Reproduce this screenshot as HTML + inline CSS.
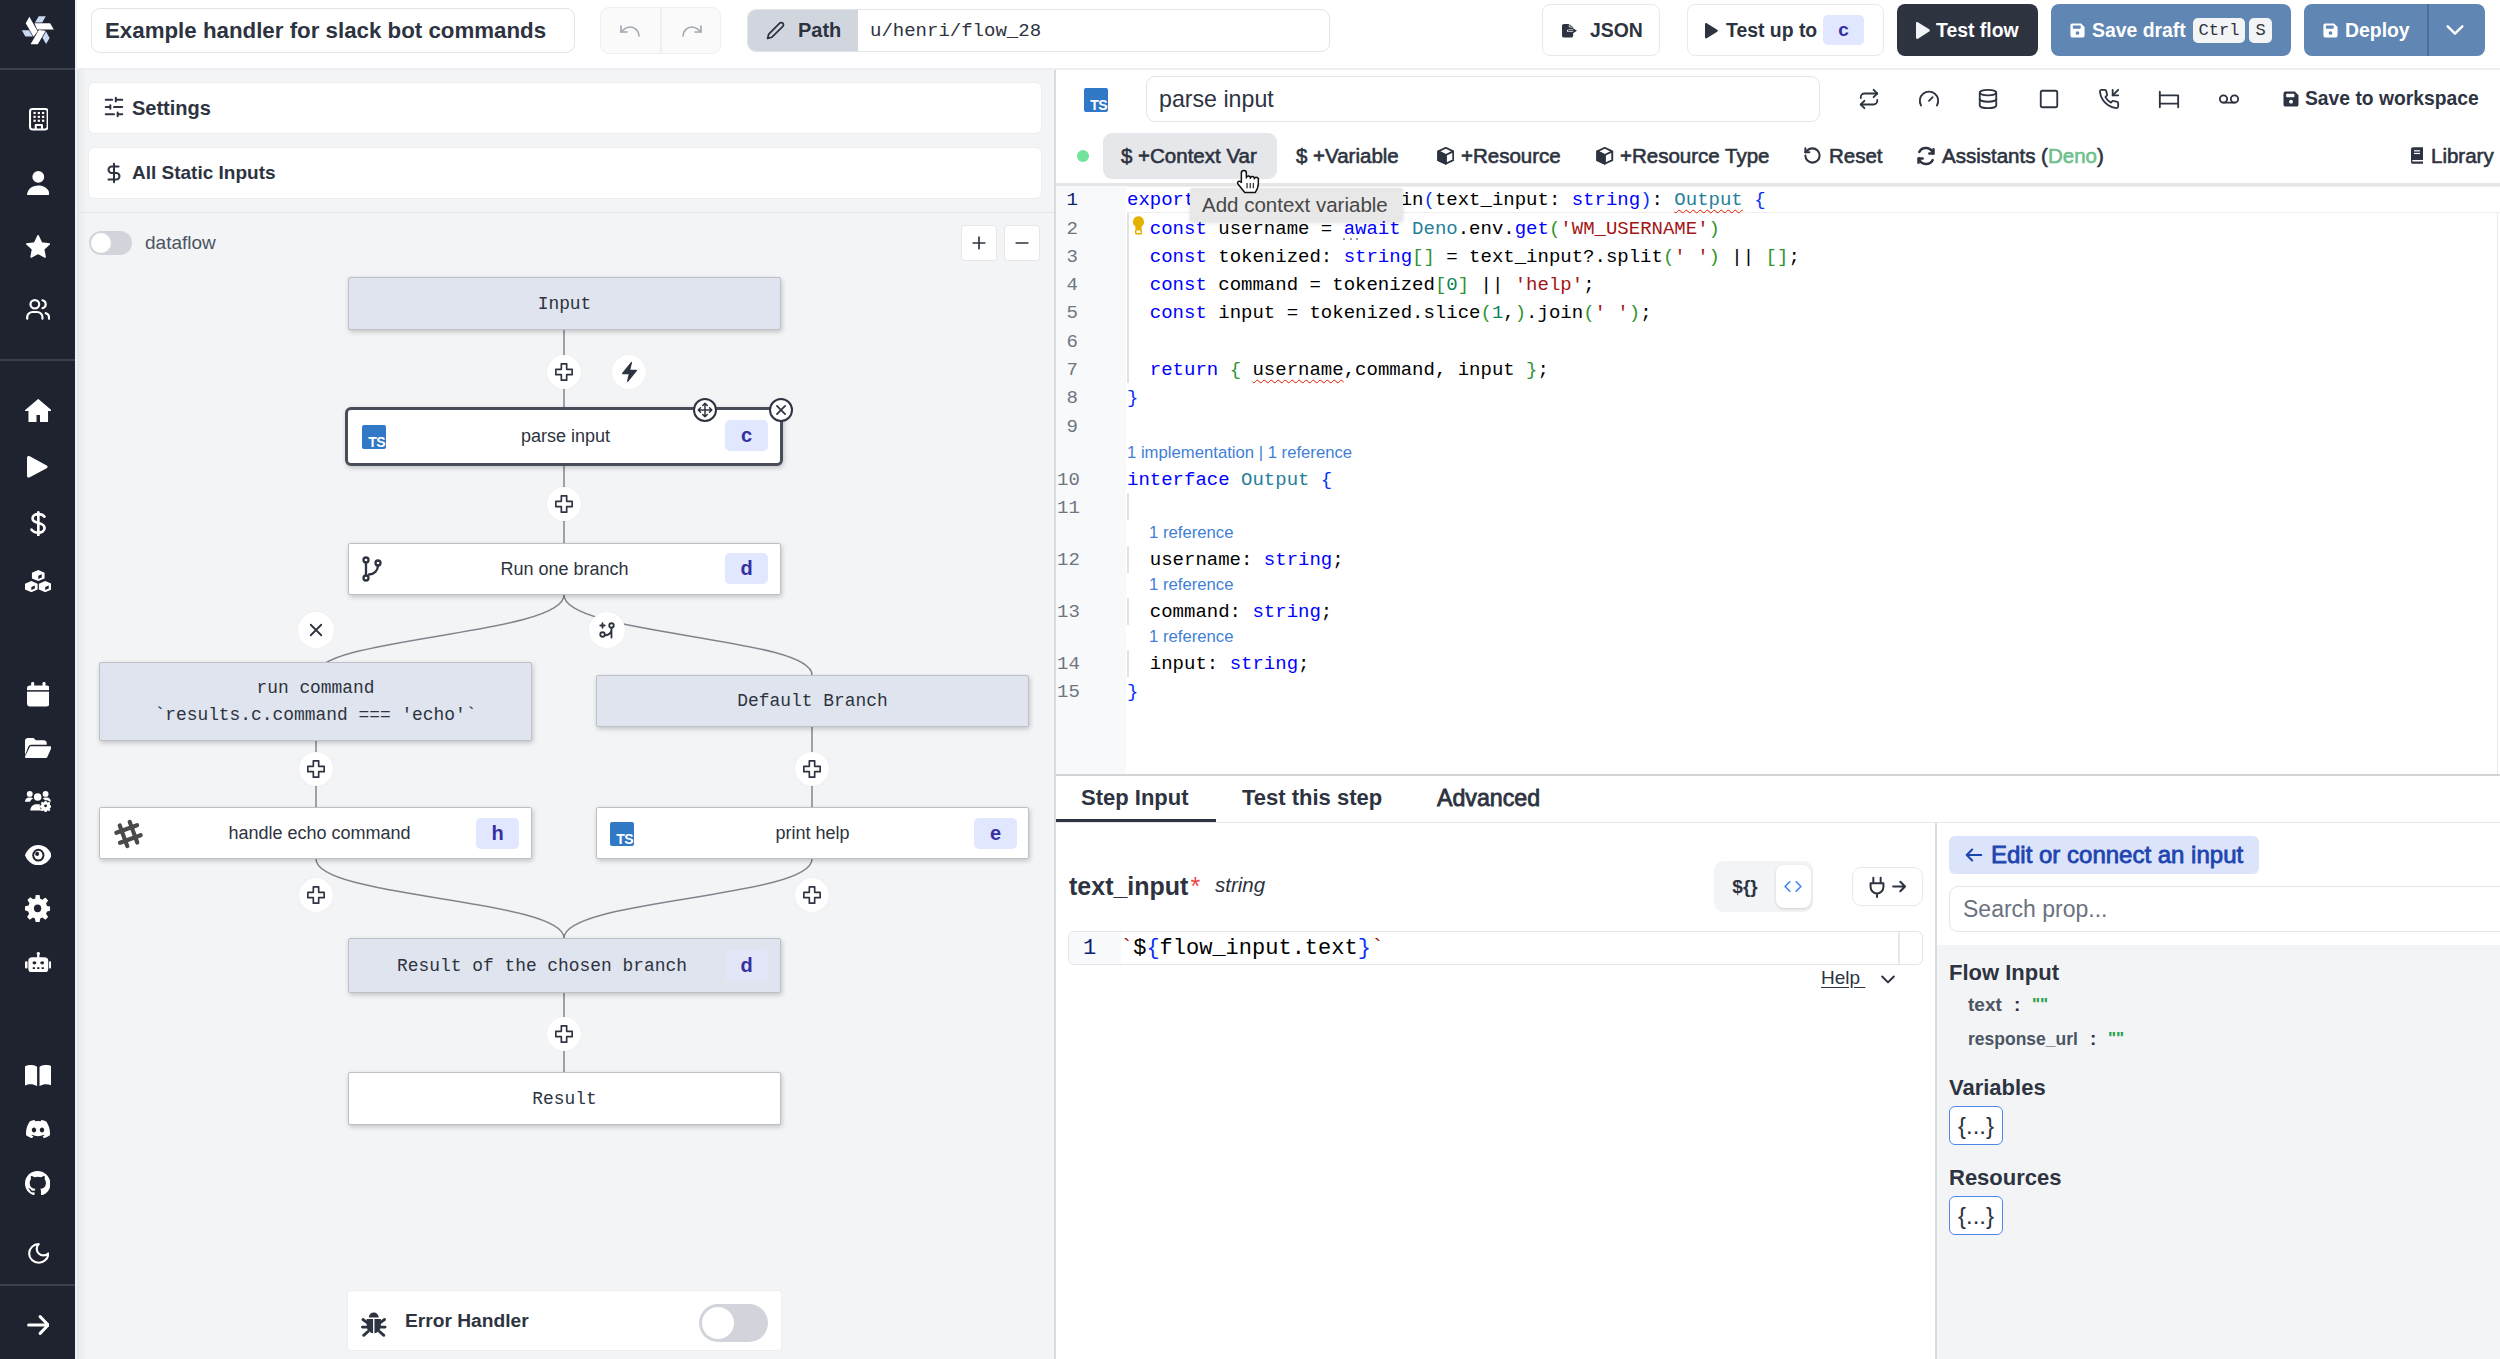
<!DOCTYPE html><html><head><meta charset="utf-8"><style>
*{box-sizing:border-box;margin:0;padding:0}
html,body{width:2500px;height:1359px;overflow:hidden}
body{position:relative;font-family:"Liberation Sans",sans-serif;background:#fff;color:#2d3340}
.a{position:absolute}
.m{font-family:"Liberation Mono",monospace}
.fx{display:flex;align-items:center}
.fc{display:flex;align-items:center;justify-content:center}
svg{display:block}
.btn{position:absolute;display:flex;align-items:center;justify-content:center;border-radius:8px;font-weight:bold;font-size:20px;white-space:nowrap}
.node{position:absolute;border:1.5px solid #bcc1c8;box-shadow:1px 2px 5px rgba(0,0,0,.2);border-radius:2px;display:flex;align-items:center;justify-content:center;color:#2d3340}
.gn{background:#dfe4ee}
.wn{background:#fff}
.nt{font-family:"Liberation Mono",monospace;font-size:17.9px}
.st{font-size:18px}
.badge{position:absolute;background:#e0e7ff;color:#3730a3;font-weight:bold;font-size:20px;border-radius:5px;display:flex;align-items:center;justify-content:center}
.circ{position:absolute;border-radius:50%;background:#fff;display:flex;align-items:center;justify-content:center;box-shadow:0 0 2px rgba(0,0,0,.06)}
.ln{position:absolute;white-space:pre;font-family:"Liberation Mono",monospace;font-size:19px;line-height:28px;color:#000}
.num{position:absolute;font-family:"Liberation Mono",monospace;font-size:19px;line-height:28px;color:#6e7681;text-align:right;width:40px}
.k{color:#0000ff}.t{color:#267f99}.s{color:#a31515}.g{color:#319331}.b{color:#0431fa}.n{color:#098658}
.lens{position:absolute;font-size:16.7px;color:#3f7fd8;white-space:nowrap}
.sq{text-decoration:underline wavy #e51400;text-decoration-thickness:1px;text-underline-offset:4px}
</style></head><body><div class="a" style="left:0;top:0;width:75px;height:1359px;background:#1f2330"></div>
<div class="a" style="left:75px;top:0;width:2px;height:1359px;background:#eef1f6"></div>
<div class="a" style="left:0;top:68px;width:75px;height:2px;background:#3b404c"></div>
<div class="a" style="left:0;top:359px;width:75px;height:2px;background:#3b404c"></div>
<div class="a" style="left:0;top:1284px;width:75px;height:2px;background:#3b404c"></div>
<svg class="a" style="left:0;top:0" width="75" height="68" viewBox="0 0 75 68"><g><polygon points="34.5,23.2 50.1,23.2 53.8,29.5 37.2,29.5" fill="#fff"/><polygon points="38.7,16.2 45.8,16.2 42.2,22.5 35,22.5" fill="#c9d8f3"/></g><g transform="rotate(120 37.9 30.2)"><polygon points="34.5,23.2 50.1,23.2 53.8,29.5 37.2,29.5" fill="#fff"/><polygon points="38.7,16.2 45.8,16.2 42.2,22.5 35,22.5" fill="#c9d8f3"/></g><g transform="rotate(240 37.9 30.2)"><polygon points="34.5,23.2 50.1,23.2 53.8,29.5 37.2,29.5" fill="#fff"/><polygon points="38.7,16.2 45.8,16.2 42.2,22.5 35,22.5" fill="#c9d8f3"/></g></svg>
<svg class="a" style="left:28.5px;top:108.4px;color:#fff" width="19.700000000000003" height="22.400000000000006" viewBox="2.5 0.5 19.0 23.0" preserveAspectRatio="none" fill="none" stroke="currentColor" stroke-width="2" stroke-linecap="round" stroke-linejoin="round"><rect x="3.5" y="1.5" width="17" height="21" rx="2.5"/><g fill="#fff" stroke="none"><rect x="6.8" y="4.5" width="2.2" height="2.2"/><rect x="10.9" y="4.5" width="2.2" height="2.2"/><rect x="15" y="4.5" width="2.2" height="2.2"/><rect x="6.8" y="8.5" width="2.2" height="2.2"/><rect x="10.9" y="8.5" width="2.2" height="2.2"/><rect x="15" y="8.5" width="2.2" height="2.2"/><rect x="6.8" y="12.5" width="2.2" height="2.2"/><rect x="10.9" y="12.5" width="2.2" height="2.2"/><rect x="15" y="12.5" width="2.2" height="2.2"/></g><path d="M9 22v-4h6v4"/></svg>
<svg class="a" style="left:26.7px;top:170.6px;color:#fff" width="22.599999999999998" height="24.599999999999994" viewBox="1.5 1 21.0 23" preserveAspectRatio="none" fill="currentColor"><circle cx="12" cy="6.5" r="5.5"/><path d="M1.5 24c0-6 4.5-9.5 10.5-9.5S22.5 18 22.5 24z"/></svg>
<svg class="a" style="left:25.8px;top:235px;color:#fff" width="24.2" height="22.80000000000001" viewBox="0.55 0.75 22.9 21.85" preserveAspectRatio="none" fill="currentColor"><path d="M12 1.5l3.3 6.9 7.4.9-5.5 5.1 1.4 7.4L12 18.2l-6.6 3.6 1.4-7.4L1.3 9.3l7.4-.9z" stroke="#fff" stroke-width="1.5" stroke-linejoin="round"/></svg>
<svg class="a" style="left:25.8px;top:298.8px;color:#fff" width="24.2" height="20.80000000000001" viewBox="0.9 1.9 22.200000000000003 20.200000000000003" preserveAspectRatio="none" fill="none" stroke="currentColor" stroke-width="2" stroke-linecap="round" stroke-linejoin="round"><circle cx="9" cy="7" r="4"/><path d="M2 21v-1.5a5 5 0 0 1 5-5h4a5 5 0 0 1 5 5V21"/><path d="M16 3.13a4 4 0 0 1 0 7.75"/><path d="M22 21v-1.5a4 4 0 0 0-3-3.87"/></svg>
<svg class="a" style="left:24.7px;top:399.4px;color:#fff" width="26.500000000000004" height="23.0" viewBox="0.5 2 23.0 20" preserveAspectRatio="none" fill="currentColor"><path d="M12 2.5L1 12h3v9.5h6v-6h4v6h6V12h3z" stroke="#fff" stroke-width="1" stroke-linejoin="round"/></svg>
<svg class="a" style="left:27.4px;top:456.3px;color:#fff" width="20.300000000000004" height="21.69999999999999" viewBox="5 1.9 16.8 20.200000000000003" preserveAspectRatio="none" fill="currentColor"><path d="M5 3.5c0-1.2 1.3-1.9 2.3-1.3l14 8.5c1 .6 1 2 0 2.6l-14 8.5C6.3 22.4 5 21.7 5 20.5z"/></svg>
<svg class="a" style="left:30px;top:510.7px;color:#fff" width="15.899999999999999" height="25.599999999999966" viewBox="4.5 0.3 14.3 23.4" preserveAspectRatio="none" fill="none" stroke="currentColor" stroke-width="2.4" stroke-linecap="round" stroke-linejoin="round"><path d="M12 1.5v21"/><path d="M17.5 5.5c-1-1.4-3-2.3-5.5-2.3-3 0-5.2 1.6-5.2 4s2 3.3 5.2 4.1c3.4.8 5.6 1.9 5.6 4.6 0 2.5-2.4 4.2-5.6 4.2-2.8 0-5-1-6.1-2.8"/></svg>
<svg class="a" style="left:24.7px;top:569.8px;color:#fff" width="26.500000000000004" height="22.200000000000045" viewBox="1.5 1 21.0 21" preserveAspectRatio="none" fill="currentColor"><path d="M12 1l5 2.5v5.5l-5 2.5-5-2.5V3.5z"/><path d="M6.5 11.5l5 2.5v5.5l-5 2.5-5-2.5V14z"/><path d="M17.5 11.5l5 2.5v5.5l-5 2.5-5-2.5V14z"/><g fill="#1f2330"><path d="M12 6.5l2.8-1.4v3l-2.8 1.4z"/><path d="M6.5 17l2.8-1.4v3l-2.8 1.4z"/><path d="M17.5 17l2.8-1.4v3l-2.8 1.4z"/></g></svg>
<svg class="a" style="left:26.7px;top:682.4px;color:#fff" width="22.7" height="24.399999999999977" viewBox="2.5 1 19.0 21" preserveAspectRatio="none" fill="currentColor"><rect x="2.5" y="4" width="19" height="18" rx="2.5"/><rect x="6" y="1" width="2.5" height="5" rx="1"/><rect x="15.5" y="1" width="2.5" height="5" rx="1"/><rect x="2.5" y="8" width="19" height="1.3" fill="#1f2330"/></svg>
<svg class="a" style="left:24.7px;top:738px;color:#fff" width="26.3" height="20.100000000000023" viewBox="1 3 23 18" preserveAspectRatio="none" fill="currentColor"><path d="M1 5.5C1 4.1 2.1 3 3.5 3h5l2 2h7c1.4 0 2.5 1.1 2.5 2.5V9H6.5c-1.2 0-2.2.7-2.6 1.8L1 18.5z"/><path d="M5.5 10.5h17.5c.8 0 1.3.8 1 1.5l-3.5 8c-.3.6-.9 1-1.6 1H2c-.8 0-1.3-.8-1-1.5z"/></svg>
<svg class="a" style="left:25px;top:791.3px;color:#fff" width="26.4" height="20.600000000000023" viewBox="0.5 0.7 25.0 19.8" preserveAspectRatio="none" fill="currentColor"><circle cx="5" cy="3.5" r="2.8"/><circle cx="20" cy="3.5" r="2.8"/><path d="M0.5 11c0-2.3 1.6-4 3.8-4h1.6c.9 0 1.7.3 2.3.8-1.6 .8-2.6 2-3 3.2z"/><path d="M25 11c0-2.3-1.6-4-3.8-4h-1.6c-.9 0-1.7.3-2.3.8 1.6 .8 2.6 2 3 3.2z"/><circle cx="12.5" cy="6.5" r="3.6"/><path d="M5.5 19.5c0-3.5 2.6-6 5.8-6h2.4c3.2 0 5.8 2.5 5.8 6z"/><circle cx="20" cy="15" r="5.6" fill="#1f2330"/><path d="M19 10.3h2l.4 1.5 1.3.6 1.4-.8 1.4 1.4-.8 1.4.6 1.3 1.5.4v2l-1.5.4-.6 1.3.8 1.4-1.4 1.4-1.4-.8-1.3.6-.4 1.5h-2l-.4-1.5-1.3-.6-1.4.8-1.4-1.4.8-1.4-.6-1.3-1.5-.4v-2l1.5-.4.6-1.3-.8-1.4 1.4-1.4 1.4.8 1.3-.6z" transform="translate(20 15) scale(.82) translate(-20 -16.3)"/><circle cx="20" cy="15" r="1.4" fill="#1f2330"/></svg>
<svg class="a" style="left:24.7px;top:844.7px;color:#fff" width="26.7" height="20.299999999999955" viewBox="1 4 22 16" preserveAspectRatio="none" fill="currentColor"><path d="M12 4C6.5 4 2.5 8 1 12c1.5 4 5.5 8 11 8s9.5-4 11-8c-1.5-4-5.5-8-11-8z"/><circle cx="12" cy="12" r="5" fill="#1f2330"/><circle cx="12" cy="12" r="3.4"/><circle cx="11" cy="11" r="1.6" fill="#1f2330"/></svg>
<svg class="a" style="left:25.3px;top:895.3px;color:#fff" width="25.2" height="26.600000000000023" viewBox="1 1 22 22" preserveAspectRatio="none" fill="currentColor"><path d="M10.3 1h3.4l.6 3.1 1.9.8 2.6-1.8 2.4 2.4-1.8 2.6.8 1.9 3.1.6v3.4l-3.1.6-.8 1.9 1.8 2.6-2.4 2.4-2.6-1.8-1.9.8-.6 3.1h-3.4l-.6-3.1-1.9-.8-2.6 1.8-2.4-2.4 1.8-2.6-.8-1.9L1 13.7v-3.4l3.1-.6.8-1.9-1.8-2.6 2.4-2.4 2.6 1.8 1.9-.8z"/><circle cx="12" cy="12" r="3.2" fill="#1f2330"/></svg>
<svg class="a" style="left:24.6px;top:951.8px;color:#fff" width="26.6" height="20.5" viewBox="0 0.8 24 20.2" preserveAspectRatio="none" fill="currentColor"><rect x="3" y="6" width="18" height="15" rx="3.5"/><rect x="11" y="1.5" width="2" height="5"/><circle cx="12" cy="2.3" r="1.5"/><rect x="0" y="10" width="2.3" height="7" rx="1"/><rect x="21.7" y="10" width="2.3" height="7" rx="1"/><circle cx="8.5" cy="11.5" r="1.7" fill="#1f2330"/><circle cx="15.5" cy="11.5" r="1.7" fill="#1f2330"/><rect x="7" y="15.8" width="2" height="1.8" fill="#1f2330"/><rect x="11" y="15.8" width="2" height="1.8" fill="#1f2330"/><rect x="15" y="15.8" width="2" height="1.8" fill="#1f2330"/></svg>
<svg class="a" style="left:24.6px;top:1064.8px;color:#fff" width="26.6" height="21.200000000000045" viewBox="1 3.5 22 17.5" preserveAspectRatio="none" fill="currentColor"><path d="M1 4.5c3-1.5 7-1.5 10 .5v16c-3-2-7-2-10-.5z"/><path d="M23 4.5c-3-1.5-7-1.5-10 .5v16c3-2 7-2 10-.5z"/></svg>
<svg class="a" style="left:26px;top:1120.2px;color:#fff" width="24" height="18.299999999999955" viewBox="0 3 24 18.1" preserveAspectRatio="none" fill="currentColor"><path d="M20.3 4.4A19.6 19.6 0 0 0 15.4 3l-.6 1.3a18 18 0 0 0-5.5 0L8.6 3a19.6 19.6 0 0 0-4.9 1.5C.6 9.1-.3 13.6.1 18.1a19.8 19.8 0 0 0 6 3l1.3-2.1c-.7-.3-1.4-.6-2-1l.5-.4a14 14 0 0 0 12.2 0l.5.4c-.6.4-1.3.7-2 1l1.3 2.1a19.7 19.7 0 0 0 6-3c.5-5.2-.9-9.7-3.6-13.7zM8 15.3c-1.2 0-2.2-1.1-2.2-2.4s1-2.4 2.2-2.4 2.2 1.1 2.2 2.4-1 2.4-2.2 2.4zm8 0c-1.2 0-2.2-1.1-2.2-2.4s1-2.4 2.2-2.4 2.2 1.1 2.2 2.4-1 2.4-2.2 2.4z"/></svg>
<svg class="a" style="left:25.3px;top:1170.8px;color:#fff" width="25.2" height="24.700000000000045" viewBox="0.5 0.5 23.0 22.9" preserveAspectRatio="none" fill="currentColor"><path d="M12 .5C5.6.5.5 5.6.5 12c0 5.1 3.3 9.4 7.9 10.9.6.1.8-.3.8-.6v-2c-3.2.7-3.9-1.5-3.9-1.5-.5-1.3-1.3-1.7-1.3-1.7-1-.7.1-.7.1-.7 1.2.1 1.8 1.2 1.8 1.2 1 1.8 2.8 1.3 3.5 1 .1-.8.4-1.3.7-1.6-2.6-.3-5.3-1.3-5.3-5.7 0-1.3.5-2.300 1.2-3.1-.1-.3-.5-1.5.1-3.1 0 0 1-.3 3.2 1.2a11 11 0 0 1 5.8 0c2.2-1.5 3.2-1.2 3.2-1.2.6 1.6.2 2.8.1 3.1.7.8 1.2 1.9 1.2 3.1 0 4.4-2.7 5.4-5.3 5.700.4.4.8 1.1.8 2.2v3.3c0 .3.2.7.8.6 4.6-1.5 7.9-5.8 7.9-10.9C23.5 5.6 18.4.5 12 .5z"/></svg>
<svg class="a" style="left:27.5px;top:1242.8px;color:#fff" width="21.4" height="20.90000000000009" viewBox="1.9 1.9 20.200000000000003 20.200000000000003" preserveAspectRatio="none" fill="none" stroke="currentColor" stroke-width="2" stroke-linecap="round" stroke-linejoin="round"><path d="M12 3a6 6 0 0 0 9 9 9 9 0 1 1-9-9z"/></svg>
<svg class="a" style="left:26.6px;top:1315px;color:#fff" width="22.799999999999997" height="20" viewBox="1.6 3.6 19.799999999999997 16.799999999999997" preserveAspectRatio="none" fill="none" stroke="currentColor" stroke-width="2.6" stroke-linecap="round" stroke-linejoin="round"><path d="M3 12h17"/><path d="M13 5l7 7-7 7"/></svg>
<div class="a" style="left:77px;top:0;width:2423px;height:68px;background:#fff"></div>
<div class="a" style="left:77px;top:68px;width:2423px;height:1.5px;background:#eceef1"></div>
<div class="a fx" style="left:91px;top:8px;width:484px;height:45px;border:1.5px solid #e2e4e8;border-radius:9px;padding-left:13px;font-size:22.3px;font-weight:bold;color:#2d3340;white-space:nowrap">Example handler for slack bot commands</div>
<div class="a" style="left:600px;top:7px;width:121px;height:47px;border:1.5px solid #eeeff1;border-radius:9px;background:#fafafa"></div>
<div class="a" style="left:660px;top:8px;width:1.5px;height:45px;background:#eeeff1"></div>
<svg class="a" style="left:618px;top:18.6px;color:#a3a8b0;" width="24" height="24" viewBox="0 0 24 24" fill="none" stroke="currentColor" stroke-width="1.6" stroke-linecap="round" stroke-linejoin="round"><path d="M3 7v6h6"/><path d="M21 17a9 9 0 0 0-9-9 9 9 0 0 0-6 2.3L3 13"/></svg>
<svg class="a" style="left:679.5px;top:18.6px;color:#a3a8b0;" width="24" height="24" viewBox="0 0 24 24" fill="none" stroke="currentColor" stroke-width="1.6" stroke-linecap="round" stroke-linejoin="round"><path d="M21 7v6h-6"/><path d="M3 17a9 9 0 0 1 9-9 9 9 0 0 1 6 2.3l3 2.7"/></svg>
<div class="a" style="left:747px;top:9px;width:583px;height:43px;border:1.5px solid #e2e4e8;border-radius:9px;background:#fff;overflow:hidden"><div class="a" style="left:0;top:0;width:110px;height:43px;background:#d1d6de"></div></div>
<svg class="a" style="left:766px;top:21px;color:#2d3340;" width="19" height="19" viewBox="0 0 24 24" fill="none" stroke="currentColor" stroke-width="2.2" stroke-linecap="round" stroke-linejoin="round"><path d="M17 3a2.85 2.83 0 1 1 4 4L7.5 20.5 2 22l1.5-5.5Z"/></svg>
<div class="a fx" style="left:798px;top:9px;height:43px;font-size:20px;font-weight:bold;color:#2d3340">Path</div>
<div class="a fx m" style="left:870px;top:9px;height:43px;font-size:19px;color:#2d3340">u/henri/flow_28</div>
<div class="btn" style="left:1542px;top:4px;width:118px;height:52px;border:1.5px solid #e8eaed;color:#2d3340"></div>
<svg class="a" style="left:1561.5px;top:24px" width="15" height="13.5" viewBox="2 1 17.5 22" preserveAspectRatio="none" fill="#2d3340"><path d="M2 3.5A2.5 2.5 0 0 1 4.5 1H10l5 5v4H9.8a2 2 0 0 0 0 4H15v6.5a2.5 2.5 0 0 1-2.5 2.5h-8A2.5 2.5 0 0 1 2 20.5z"/><path d="M10.5 1.5v4.5H15" stroke="#fff" stroke-width="1" fill="none"/><path d="M15 8l4.5 4-4.5 4z"/><rect x="9" y="11" width="7" height="2"/></svg>
<div class="a fx" style="left:1590px;top:4px;height:52px;font-size:19.4px;font-weight:bold;color:#2d3340">JSON</div>
<div class="btn" style="left:1687px;top:4px;width:197px;height:52px;border:1.5px solid #e8eaed"></div>
<svg class="a" style="left:1705.4px;top:23px" width="13" height="15.5" viewBox="3 1.9 18.6 20.5" preserveAspectRatio="none" fill="#2d3340"><path d="M3 3.5c0-1.3 1.4-2 2.5-1.3l15 8.5c1.1.6 1.1 2.2 0 2.8l-15 8.5C4.4 22.7 3 22 3 20.7z"/></svg>
<div class="a fx" style="left:1726px;top:4px;height:52px;font-size:19.4px;font-weight:bold;color:#2d3340">Test up to</div>
<div class="badge" style="left:1823px;top:15px;width:41px;height:30px;font-size:19px">c</div>
<div class="btn" style="left:1897px;top:4px;width:141px;height:52px;background:#2e3340"></div>
<svg class="a" style="left:1916px;top:22px" width="14" height="17" viewBox="3 1.9 18.6 20.5" preserveAspectRatio="none" fill="#f3f4f8"><path d="M3 3.5c0-1.3 1.4-2 2.5-1.3l15 8.5c1.1.6 1.1 2.2 0 2.8l-15 8.5C4.4 22.7 3 22 3 20.7z"/></svg>
<div class="a fx" style="left:1936px;top:4px;height:52px;font-size:19.4px;font-weight:bold;color:#fff">Test flow</div>
<div class="btn" style="left:2051px;top:4px;width:240px;height:52px;background:#6086b4"></div>
<svg class="a" style="left:2069px;top:22px;color:#fff;" width="17" height="17" viewBox="0 0 24 24" fill="currentColor"><path d="M2 4.5A2.5 2.5 0 0 1 4.5 2h12.6L22 6.9v12.6a2.5 2.5 0 0 1-2.5 2.5h-15A2.5 2.5 0 0 1 2 19.5z"/><rect x="5.5" y="5" width="11" height="4.5" rx="1" fill="#6086b4"/><circle cx="12" cy="15.5" r="2.6" fill="#6086b4"/></svg>
<div class="a fx" style="left:2092px;top:4px;height:52px;font-size:19.4px;font-weight:bold;color:#fff">Save draft</div>
<div class="a fc m" style="left:2193px;top:18px;width:52px;height:25px;background:#f3f4f6;border-radius:5px;font-size:17px;color:#2d3340">Ctrl</div>
<div class="a fc m" style="left:2249px;top:18px;width:23px;height:25px;background:#f3f4f6;border-radius:5px;font-size:17px;color:#2d3340">S</div>
<div class="btn" style="left:2304px;top:4px;width:181px;height:52px;background:#6086b4"></div>
<div class="a" style="left:2427px;top:4px;width:1.5px;height:52px;background:#4b6d97"></div>
<svg class="a" style="left:2322px;top:22px;color:#fff;" width="17" height="17" viewBox="0 0 24 24" fill="currentColor"><path d="M2 4.5A2.5 2.5 0 0 1 4.5 2h12.6L22 6.9v12.6a2.5 2.5 0 0 1-2.5 2.5h-15A2.5 2.5 0 0 1 2 19.5z"/><rect x="5.5" y="5" width="11" height="4.5" rx="1" fill="#6086b4"/><circle cx="12" cy="15.5" r="2.6" fill="#6086b4"/></svg>
<div class="a fx" style="left:2345px;top:4px;height:52px;font-size:19.4px;font-weight:bold;color:#fff">Deploy</div>
<svg class="a" style="left:2444px;top:19px;color:#fff;" width="22" height="22" viewBox="0 0 24 24" fill="none" stroke="currentColor" stroke-width="2.6" stroke-linecap="round" stroke-linejoin="round"><path d="m4 8 8 8 8-8"/></svg>
<div class="a" style="left:77px;top:69.5px;width:977px;height:1290px;background:linear-gradient(to right,#e4e7e8 0px,#eceeef 4px,#f3f4f6 9px)"></div>
<div class="a" style="left:89px;top:83px;width:952px;height:50px;background:#fff;border-radius:5px;box-shadow:0 0 0 1px #eceef1"></div>
<svg class="a" style="left:103px;top:96px;color:#2d3340;" width="22" height="22" viewBox="0 0 24 24" fill="none" stroke="currentColor" stroke-width="2.2" stroke-linecap="round" stroke-linejoin="round"><path d="M21 4h-7M10 4H3M21 12h-9M8 12H3M21 20h-5M12 20H3M14 2v4M8 10v4M16 18v4"/></svg>
<div class="a fx" style="left:132px;top:83px;height:50px;font-size:20px;font-weight:bold;color:#2d3340">Settings</div>
<div class="a" style="left:89px;top:148px;width:952px;height:50px;background:#fff;border-radius:5px;box-shadow:0 0 0 1px #eceef1"></div>
<svg class="a" style="left:103px;top:161px;color:#2d3340;" width="22" height="24" viewBox="0 0 24 24" fill="none" stroke="currentColor" stroke-width="2.2" stroke-linecap="round" stroke-linejoin="round"><path d="M12 2v20"/><path d="M17 5H9.5a3.5 3.5 0 0 0 0 7h5a3.5 3.5 0 0 1 0 7H6"/></svg>
<div class="a fx" style="left:132px;top:148px;height:50px;font-size:19px;font-weight:bold;color:#2d3340">All Static Inputs</div>
<div class="a" style="left:77px;top:211.5px;width:977px;height:1.5px;background:#e4e6ea"></div>
<div class="a" style="left:89px;top:231px;width:43px;height:24px;border-radius:12px;background:#d1d5db"></div>
<div class="a" style="left:91px;top:233px;width:20px;height:20px;border-radius:10px;background:#fff"></div>
<div class="a fx" style="left:145px;top:231px;height:24px;font-size:19px;color:#4b5563">dataflow</div>
<div class="a" style="left:962px;top:226px;width:34px;height:34px;background:#fff;border-radius:3px;box-shadow:0 0 0 1px #e5e7eb"></div>
<svg class="a" style="left:969px;top:233px;color:#2d3340;" width="20" height="20" viewBox="0 0 24 24" fill="none" stroke="currentColor" stroke-width="2" stroke-linecap="round"><path d="M12 5v14M5 12h14"/></svg>
<div class="a" style="left:1005px;top:226px;width:34px;height:34px;background:#fff;border-radius:3px;box-shadow:0 0 0 1px #e5e7eb"></div>
<svg class="a" style="left:1012px;top:233px;color:#2d3340;" width="20" height="20" viewBox="0 0 24 24" fill="none" stroke="currentColor" stroke-width="2" stroke-linecap="round"><path d="M5 12h14"/></svg>
<svg class="a" style="left:0;top:0" width="1054" height="1359" viewBox="0 0 1054 1359" fill="none" stroke="#80858d" stroke-width="1.5"><path d="M564 330 V407"/><path d="M564 465 V543"/><path d="M564 595 C564 635 316 637 316 675"/><path d="M564 595 C564 635 812 637 812 675"/><path d="M316 741 V807"/><path d="M812 727 V807"/><path d="M316 859 C316 898 564 899 564 938"/><path d="M812 859 C812 898 564 899 564 938"/><path d="M564 993 V1072"/></svg>
<div class="node gn nt" style="left:348px;top:277px;width:433px;height:53px;">Input</div>
<div class="node wn st" style="left:345px;top:407px;width:438px;height:59px;border:3px solid #474d59;border-radius:6px"><span style="margin-left:3px">parse input</span></div>
<div class="a" style="left:362px;top:425px;width:24px;height:24px;background:#3178c6;border-radius:2px;overflow:hidden"><div class="a" style="right:1px;bottom:1px;font-size:14px;font-weight:bold;color:#fff;line-height:11px;letter-spacing:-0.6px">TS</div></div>
<div class="badge" style="left:725px;top:420px;width:43px;height:31px">c</div>
<div class="node wn st" style="left:348px;top:543px;width:433px;height:52px;">Run one branch</div>
<div class="badge" style="left:725px;top:553px;width:43px;height:31px">d</div>
<svg class="a" style="left:360px;top:556px;color:#2d3340;" width="24" height="26" viewBox="0 0 24 24" fill="none" stroke="currentColor" stroke-width="2.3" stroke-linecap="round" stroke-linejoin="round"><circle cx="6" cy="3" r="2.5"/><circle cx="18" cy="6" r="2.5"/><circle cx="6" cy="21" r="2.5"/><path d="M6 5.5v13"/><path d="M18 8.5a9 9 0 0 1-9 9"/></svg>
<div class="node gn nt" style="left:99px;top:662px;width:433px;height:79px;"><div style="text-align:center;line-height:27px">run command<br>`results.c.command === 'echo'`</div></div>
<div class="node gn nt" style="left:596px;top:675px;width:433px;height:52px;">Default Branch</div>
<div class="node wn st" style="left:99px;top:807px;width:433px;height:52px;"><span style="margin-left:8px">handle echo command</span></div>
<div class="badge" style="left:476px;top:818px;width:43px;height:31px">h</div>
<div class="node wn st" style="left:596px;top:807px;width:433px;height:52px;">print help</div>
<div class="a" style="left:610px;top:822px;width:24px;height:24px;background:#3178c6;border-radius:2px;overflow:hidden"><div class="a" style="right:1px;bottom:1px;font-size:14px;font-weight:bold;color:#fff;line-height:11px;letter-spacing:-0.6px">TS</div></div>
<div class="badge" style="left:974px;top:818px;width:43px;height:31px">e</div>
<div class="node gn nt" style="left:348px;top:938px;width:433px;height:55px;"><span style="margin-right:45px">Result of the chosen branch</span></div>
<div class="badge" style="left:725px;top:950px;width:43px;height:31px;background:#e2e6f7">d</div>
<div class="node wn nt" style="left:348px;top:1072px;width:433px;height:53px;">Result</div>
<svg class="a" style="left:113px;top:819px" width="31" height="30" viewBox="-15.5 -15 31 30"><g transform="rotate(-20)" stroke="#4a4a4a" stroke-width="4.2" stroke-linecap="round" fill="none"><path d="M-5.3 -11V11M5.3 -11V11M-11 -5.3H11M-11 5.3H11"/></g></svg>
<div class="circ" style="left:547.0px;top:355.0px;width:34px;height:34px"><svg width="20" height="20" viewBox="0 0 24 24" fill="none" stroke="#2d3340" stroke-width="2" stroke-linejoin="round"><path d="M8.8 2.2h6.4v6.6h6.6v6.4h-6.6v6.6H8.8v-6.6H2.2V8.8h6.6z" /></svg></div>
<div class="circ" style="left:547.0px;top:487.0px;width:34px;height:34px"><svg width="20" height="20" viewBox="0 0 24 24" fill="none" stroke="#2d3340" stroke-width="2" stroke-linejoin="round"><path d="M8.8 2.2h6.4v6.6h6.6v6.4h-6.6v6.6H8.8v-6.6H2.2V8.8h6.6z" /></svg></div>
<div class="circ" style="left:299.0px;top:752.0px;width:34px;height:34px"><svg width="20" height="20" viewBox="0 0 24 24" fill="none" stroke="#2d3340" stroke-width="2" stroke-linejoin="round"><path d="M8.8 2.2h6.4v6.6h6.6v6.4h-6.6v6.6H8.8v-6.6H2.2V8.8h6.6z" /></svg></div>
<div class="circ" style="left:795.0px;top:752.0px;width:34px;height:34px"><svg width="20" height="20" viewBox="0 0 24 24" fill="none" stroke="#2d3340" stroke-width="2" stroke-linejoin="round"><path d="M8.8 2.2h6.4v6.6h6.6v6.4h-6.6v6.6H8.8v-6.6H2.2V8.8h6.6z" /></svg></div>
<div class="circ" style="left:299.0px;top:878.0px;width:34px;height:34px"><svg width="20" height="20" viewBox="0 0 24 24" fill="none" stroke="#2d3340" stroke-width="2" stroke-linejoin="round"><path d="M8.8 2.2h6.4v6.6h6.6v6.4h-6.6v6.6H8.8v-6.6H2.2V8.8h6.6z" /></svg></div>
<div class="circ" style="left:795.0px;top:878.0px;width:34px;height:34px"><svg width="20" height="20" viewBox="0 0 24 24" fill="none" stroke="#2d3340" stroke-width="2" stroke-linejoin="round"><path d="M8.8 2.2h6.4v6.6h6.6v6.4h-6.6v6.6H8.8v-6.6H2.2V8.8h6.6z" /></svg></div>
<div class="circ" style="left:547.0px;top:1017.0px;width:34px;height:34px"><svg width="20" height="20" viewBox="0 0 24 24" fill="none" stroke="#2d3340" stroke-width="2" stroke-linejoin="round"><path d="M8.8 2.2h6.4v6.6h6.6v6.4h-6.6v6.6H8.8v-6.6H2.2V8.8h6.6z" /></svg></div>
<div class="circ" style="left:612px;top:355px;width:34px;height:34px"><svg width="15" height="20" viewBox="3 1.5 18 21" preserveAspectRatio="none" fill="#2d3340" style="margin-left:1px"><path d="M14.615 1.595a.75.75 0 01.359.852L12.982 9.75h7.268a.75.75 0 01.548 1.262l-10.5 11.25a.75.75 0 01-1.272-.71l1.992-7.302H3.75a.75.75 0 01-.548-1.262l10.5-11.25a.75.75 0 01.913-.143z"/></svg></div>
<div class="circ" style="left:693px;top:398px;width:24px;height:24px;border:2px solid #2d3340"><svg width="18" height="18" viewBox="0 0 24 24" fill="none" stroke="#2d3340" stroke-width="2" stroke-linecap="round" stroke-linejoin="round"><path d="M12 3v18M3 12h18M9 6l3-3 3 3M9 18l3 3 3-3M6 9l-3 3 3 3M18 9l3 3-3 3"/></svg></div>
<div class="circ" style="left:769px;top:398px;width:24px;height:24px;border:2px solid #2d3340"><svg width="14" height="14" viewBox="0 0 24 24" fill="none" stroke="#2d3340" stroke-width="3" stroke-linecap="round"><path d="M5 5l14 14M19 5 5 19"/></svg></div>
<div class="circ" style="left:298px;top:612px;width:36px;height:36px"><svg width="18" height="18" viewBox="0 0 24 24" fill="none" stroke="#2d3340" stroke-width="2.4" stroke-linecap="round"><path d="M5 5l14 14M19 5 5 19"/></svg></div>
<div class="circ" style="left:589px;top:612px;width:36px;height:36px"><svg width="18" height="18" viewBox="0 0 24 24" fill="none" stroke="#2d3340" stroke-width="2.4" stroke-linecap="round"><circle cx="18" cy="6" r="3"/><circle cx="6" cy="18" r="3"/><path d="M18 9v2a8 8 0 0 1-8 8h-1M18 9v13M3 6h6M6 3v6"/></svg></div>
<div class="a" style="left:348px;top:1291px;width:433px;height:59px;background:#fff;border-radius:3px;box-shadow:0 0 0 1px #eceef1"></div>
<svg class="a" style="left:361px;top:1309.5px" width="25.5" height="27" viewBox="0 0 24 25" preserveAspectRatio="none"><g fill="#2d3340"><path d="M7.3 7a4.7 4.7 0 0 1 9.4 0z"/><path d="M5.3 8.3h13.4v6.7a6.7 6.7 0 0 1-13.4 0z"/></g><path d="M12 8v15" stroke="#fff" stroke-width="1.3"/><g stroke="#2d3340" stroke-width="2.6" stroke-linecap="round" fill="none"><path d="M5.5 11.5 1.8 8.8M18.5 11.5l3.7-2.7M5 15.8H1.3M19 15.8h3.7M6.5 20l-4 3.5M17.5 20l4 3.5"/></g></svg>
<div class="a fx" style="left:405px;top:1291px;height:59px;font-size:19.2px;font-weight:bold;color:#2d3340">Error Handler</div>
<div class="a" style="left:699px;top:1304px;width:69px;height:38px;border-radius:19px;background:#d1d5db"></div>
<div class="a" style="left:702px;top:1307px;width:32px;height:32px;border-radius:16px;background:#fff"></div>
<div class="a" style="left:1054px;top:69.5px;width:2px;height:1290px;background:#d8dbe0"></div>
<div class="a" style="left:1084px;top:87.5px;width:24px;height:24px;background:#3178c6;border-radius:2px"><div class="a" style="right:1px;bottom:1px;font-size:14px;font-weight:bold;color:#fff;line-height:11px;letter-spacing:-0.6px">TS</div></div>
<div class="a fx" style="left:1146px;top:76px;width:674px;height:46px;border:1.5px solid #e2e4e8;border-radius:9px;padding-left:12px;font-size:23.2px;color:#2d3340">parse input</div>
<svg class="a" style="left:1858px;top:88px;color:#2d3340;" width="22" height="22" viewBox="0 0 24 24" fill="none" stroke="currentColor" stroke-width="2" stroke-linecap="round" stroke-linejoin="round"><path d="m17 2 4 4-4 4"/><path d="M3 11v-1a4 4 0 0 1 4-4h14"/><path d="m7 22-4-4 4-4"/><path d="M21 13v1a4 4 0 0 1-4 4H3"/></svg>
<svg class="a" style="left:1918px;top:88px;color:#2d3340;" width="22" height="22" viewBox="0 0 24 24" fill="none" stroke="currentColor" stroke-width="2" stroke-linecap="round" stroke-linejoin="round"><path d="m12 14 4-4"/><path d="M3.34 19a10 10 0 1 1 17.32 0"/></svg>
<svg class="a" style="left:1977px;top:88px;color:#2d3340;" width="22" height="22" viewBox="0 0 24 24" fill="none" stroke="currentColor" stroke-width="2" stroke-linecap="round" stroke-linejoin="round"><ellipse cx="12" cy="5" rx="9" ry="3"/><path d="M3 5v14a9 3 0 0 0 18 0V5"/><path d="M3 12a9 3 0 0 0 18 0"/></svg>
<svg class="a" style="left:2038px;top:88px;color:#2d3340;" width="22" height="22" viewBox="0 0 24 24" fill="none" stroke="currentColor" stroke-width="2" stroke-linecap="round" stroke-linejoin="round"><rect x="3" y="3" width="18" height="18" rx="2"/></svg>
<svg class="a" style="left:2098px;top:88px;color:#2d3340;" width="22" height="22" viewBox="0 0 24 24" fill="none" stroke="currentColor" stroke-width="2" stroke-linecap="round" stroke-linejoin="round"><polyline points="16 2 16 8 22 8"/><line x1="22" x2="16" y1="2" y2="8"/><path d="M22 16.92v3a2 2 0 0 1-2.18 2 19.79 19.79 0 0 1-8.63-3.07 19.5 19.5 0 0 1-6-6 19.79 19.79 0 0 1-3.07-8.67A2 2 0 0 1 4.11 2h3a2 2 0 0 1 2 1.72 12.84 12.84 0 0 0 .7 2.81 2 2 0 0 1-.45 2.11L8.09 9.91a16 16 0 0 0 6 6l1.27-1.27a2 2 0 0 1 2.11-.45 12.84 12.84 0 0 0 2.81.7A2 2 0 0 1 22 16.92z"/></svg>
<svg class="a" style="left:2158px;top:88px;color:#2d3340;" width="22" height="22" viewBox="0 0 24 24" fill="none" stroke="currentColor" stroke-width="2" stroke-linecap="round" stroke-linejoin="round"><path d="M2 4v17"/><path d="M2 8h20v13"/><path d="M2 17h20"/></svg>
<svg class="a" style="left:2218px;top:88px;color:#2d3340;" width="22" height="22" viewBox="0 0 24 24" fill="none" stroke="currentColor" stroke-width="2" stroke-linecap="round" stroke-linejoin="round"><circle cx="6" cy="12" r="4"/><circle cx="18" cy="12" r="4"/><line x1="6" x2="18" y1="16" y2="16"/></svg>
<svg class="a" style="left:2282px;top:90px;color:#2d3340;" width="18" height="18" viewBox="0 0 24 24" fill="currentColor"><path d="M2 4.5A2.5 2.5 0 0 1 4.5 2h12.6L22 6.9v12.6a2.5 2.5 0 0 1-2.5 2.5h-15A2.5 2.5 0 0 1 2 19.5z"/><rect x="5.5" y="5" width="11" height="4.5" rx="1" fill="#fff"/><circle cx="12" cy="15.5" r="2.6" fill="#fff"/></svg>
<div class="a fx" style="left:2305px;top:79px;height:40px;font-size:19.3px;font-weight:bold;color:#2d3340">Save to workspace</div>
<div class="a" style="left:1077px;top:150px;width:12px;height:12px;border-radius:6px;background:#72e39a"></div>
<div class="a" style="left:1103px;top:133px;width:174px;height:46px;border-radius:9px;background:#e5e7eb"></div>
<div class="a fx" style="left:1121px;top:133px;height:46px;font-size:20.5px;color:#2d3340;white-space:nowrap;-webkit-text-stroke-width:0.6px">$ +Context Var</div>
<div class="a fx" style="left:1296px;top:133px;height:46px;font-size:20.5px;color:#2d3340;white-space:nowrap;-webkit-text-stroke-width:0.6px">$ +Variable</div>
<svg class="a" style="left:1436.5px;top:147px" width="17.5" height="17.5" viewBox="1.5 1 21 22" preserveAspectRatio="none" fill="none" stroke="#2d3340" stroke-width="2.3" stroke-linejoin="round"><path d="M3 6.5v11L12 22V11z" fill="#2d3340"/><path d="M12 2l9 4.5v11L12 22l-9-4.5v-11z"/><path d="M3 6.5 12 11l9-4.5M12 11v11"/></svg>
<div class="a fx" style="left:1461px;top:133px;height:46px;font-size:20.5px;color:#2d3340;white-space:nowrap;-webkit-text-stroke-width:0.6px">+Resource</div>
<svg class="a" style="left:1596px;top:147px" width="17.5" height="17.5" viewBox="1.5 1 21 22" preserveAspectRatio="none" fill="none" stroke="#2d3340" stroke-width="2.3" stroke-linejoin="round"><path d="M3 6.5v11L12 22V11z" fill="#2d3340"/><path d="M12 2l9 4.5v11L12 22l-9-4.5v-11z"/><path d="M3 6.5 12 11l9-4.5M12 11v11"/></svg>
<div class="a fx" style="left:1620px;top:133px;height:46px;font-size:20.5px;color:#2d3340;white-space:nowrap;-webkit-text-stroke-width:0.6px">+Resource Type</div>
<svg class="a" style="left:1803px;top:146px;color:#2d3340;" width="19" height="19" viewBox="0 0 24 24" fill="none" stroke="currentColor" stroke-width="2.6" stroke-linecap="round" stroke-linejoin="round"><path d="M3 12a9 9 0 1 0 9-9 9.75 9.75 0 0 0-6.74 2.74L3 8"/><path d="M3 3v5h5"/></svg>
<div class="a fx" style="left:1829px;top:133px;height:46px;font-size:20.5px;color:#2d3340;white-space:nowrap;-webkit-text-stroke-width:0.6px">Reset</div>
<svg class="a" style="left:1916px;top:146px;color:#2d3340;" width="20" height="20" viewBox="0 0 24 24" fill="none" stroke="currentColor" stroke-width="3" stroke-linecap="round" stroke-linejoin="round"><path d="M21 4v5h-5"/><path d="M20.5 9A9 9 0 0 0 4 7"/><path d="M3 20v-5h5"/><path d="M3.5 15A9 9 0 0 0 20 17"/></svg>
<div class="a fx" style="left:1942px;top:133px;height:46px;font-size:20.5px;color:#2d3340;white-space:nowrap;-webkit-text-stroke-width:0.6px">Assistants (<span style="color:#6cc08b">Deno</span>)</div>
<svg class="a" style="left:2408px;top:146px;color:#2d3340;" width="18" height="19" viewBox="0 0 24 24" fill="currentColor"><path d="M4 3.5A2.5 2.5 0 0 1 6.5 1H20v17H6.5a1 1 0 0 0 0 2H20v3H6.5A2.5 2.5 0 0 1 4 20.5z"/><rect x="8" y="5" width="8" height="1.6" fill="#fff"/><rect x="8" y="8.5" width="8" height="1.6" fill="#fff"/></svg>
<div class="a fx" style="left:2431px;top:133px;height:46px;font-size:20.5px;color:#2d3340;white-space:nowrap;-webkit-text-stroke-width:0.6px">Library</div>
<div class="a" style="left:1056px;top:183px;width:1444px;height:3px;background:#e6e6e6"></div>
<div class="a" style="left:1056px;top:186px;width:70px;height:589px;background:#f8f9fa"></div>
<div class="a" style="left:1127px;top:186px;width:1373px;height:27px;border-top:1.5px solid #eeeeee;border-bottom:1.5px solid #eeeeee"></div>
<div class="num" style="left:1038px;top:186px;color:#0b216f">1</div>
<div class="ln" style="left:1127px;top:186px"><span class="k">export</span> async function main<span class="b">(</span>text_input: <span class="k">string</span><span class="b">)</span>: <span class="t sq">Output</span> <span class="b">{</span></div>
<div class="num" style="left:1038px;top:214.5px;color:#6e7681">2</div>
<div class="ln" style="left:1127px;top:214.5px">  <span class="k">const</span> username = <span class="k">await</span> <span class="t">Deno</span>.env.<span class="k">get</span><span class="g">(</span><span class="s">'WM_USERNAME'</span><span class="g">)</span></div>
<div class="num" style="left:1038px;top:243px;color:#6e7681">3</div>
<div class="ln" style="left:1127px;top:243px">  <span class="k">const</span> tokenized: <span class="k">string</span><span class="g">[]</span> = text_input?.split<span class="g">(</span><span class="s">' '</span><span class="g">)</span> || <span class="g">[]</span>;</div>
<div class="num" style="left:1038px;top:271px;color:#6e7681">4</div>
<div class="ln" style="left:1127px;top:271px">  <span class="k">const</span> command = tokenized<span class="g">[</span><span class="n">0</span><span class="g">]</span> || <span class="s">'help'</span>;</div>
<div class="num" style="left:1038px;top:299px;color:#6e7681">5</div>
<div class="ln" style="left:1127px;top:299px">  <span class="k">const</span> input = tokenized.slice<span class="g">(</span><span class="n">1</span>,<span class="g">)</span>.join<span class="g">(</span><span class="s">' '</span><span class="g">)</span>;</div>
<div class="num" style="left:1038px;top:327.5px;color:#6e7681">6</div>
<div class="num" style="left:1038px;top:356px;color:#6e7681">7</div>
<div class="ln" style="left:1127px;top:356px">  <span class="k">return</span> <span class="g">{</span> <span class="sq">username</span>,command, input <span class="g">}</span>;</div>
<div class="num" style="left:1038px;top:384px;color:#6e7681">8</div>
<div class="ln" style="left:1127px;top:384px"><span class="b">}</span></div>
<div class="num" style="left:1038px;top:412.5px;color:#6e7681">9</div>
<div class="num" style="left:1057px;top:466px;text-align:left;color:#6e7681">10</div>
<div class="ln" style="left:1127px;top:466px"><span class="k">interface</span> <span class="t">Output</span> <span class="b">{</span></div>
<div class="num" style="left:1057px;top:494px;text-align:left;color:#6e7681">11</div>
<div class="num" style="left:1057px;top:546px;text-align:left;color:#6e7681">12</div>
<div class="ln" style="left:1127px;top:546px">  username: <span class="k">string</span>;</div>
<div class="num" style="left:1057px;top:598px;text-align:left;color:#6e7681">13</div>
<div class="ln" style="left:1127px;top:598px">  command: <span class="k">string</span>;</div>
<div class="num" style="left:1057px;top:650px;text-align:left;color:#6e7681">14</div>
<div class="ln" style="left:1127px;top:650px">  input: <span class="k">string</span>;</div>
<div class="num" style="left:1057px;top:678px;text-align:left;color:#6e7681">15</div>
<div class="ln" style="left:1127px;top:678px"><span class="b">}</span></div>
<div class="a" style="left:1127px;top:213px;width:1.5px;height:170px;background:#e3e3e3"></div>
<div class="a" style="left:1127px;top:493px;width:1.5px;height:27px;background:#e3e3e3"></div>
<div class="a" style="left:1127px;top:545.5px;width:1.5px;height:27.5px;background:#e3e3e3"></div>
<div class="a" style="left:1127px;top:597.5px;width:1.5px;height:27.5px;background:#e3e3e3"></div>
<div class="a" style="left:1127px;top:649.5px;width:1.5px;height:27.5px;background:#e3e3e3"></div>
<div class="lens" style="left:1127px;top:443px">1 implementation | 1 reference</div>
<div class="lens" style="left:1149px;top:523px">1 reference</div>
<div class="lens" style="left:1149px;top:575px">1 reference</div>
<div class="lens" style="left:1149px;top:627px">1 reference</div>
<svg class="a" style="left:1129px;top:214px;color:#e5b100;" width="19" height="22" viewBox="0 0 24 24" fill="currentColor"><path d="M12 1a7 7 0 0 0-4 12.7V17h8v-3.3A7 7 0 0 0 12 1z"/><rect x="8.5" y="18" width="7" height="5" rx="1" fill="none" stroke="#e5b100" stroke-width="2"/></svg>
<div class="a fx" style="left:1190px;top:188px;width:213px;height:33px;background:#e8e8e8;box-shadow:0 2px 4px rgba(0,0,0,.12);border-radius:2px;padding-left:12px;font-size:20.5px;color:#474747;white-space:nowrap">Add context variable</div>
<svg class="a" style="left:1235.5px;top:168.5px" width="24" height="25.5" viewBox="-0.75 -0.75 24 25.5"><path d="M4.6 3.2a2.5 2.5 0 0 1 5 0V8.2a2 2 0 0 1 4 .3a2 2 0 0 1 4 .6a2 2 0 0 1 4 1.2V14c0 3.2-1.3 5.8-3 8.7H8L1.2 14.2c-1.1-1.4 .3-3.3 2-2.6l1.4 1z" fill="#fff" stroke="#111" stroke-width="1.5" stroke-linejoin="round"/><path d="M10.3 13.2v5.3M13.5 13.2v5.3M16.6 13.2v5.3" stroke="#333" stroke-width="1.3"/></svg>
<div class="a" style="left:1343px;top:238px;width:2.2px;height:2.2px;border-radius:50%;background:#7a7a7a"></div>
<div class="a" style="left:1349.5px;top:238px;width:2.2px;height:2.2px;border-radius:50%;background:#7a7a7a"></div>
<div class="a" style="left:1356px;top:238px;width:2.2px;height:2.2px;border-radius:50%;background:#7a7a7a"></div>
<div class="a" style="left:2497px;top:212px;width:1.2px;height:563px;background:#ebebeb"></div>
<div class="a" style="left:1056px;top:774px;width:1444px;height:1.5px;background:#d4d4d4"></div>
<div class="a fx" style="left:1081px;top:776px;height:44px;font-size:22px;font-weight:bold;color:#2d3340;white-space:nowrap">Step Input</div>
<div class="a fx" style="left:1242px;top:776px;height:44px;font-size:22px;font-weight:bold;color:#2d3340;white-space:nowrap">Test this step</div>
<div class="a fx" style="left:1437px;top:776px;height:44px;font-size:23.2px;color:#2d3340;-webkit-text-stroke-width:0.8px">Advanced</div>
<div class="a" style="left:1056px;top:821.5px;width:1444px;height:1.5px;background:#e5e7eb"></div>
<div class="a" style="left:1056px;top:819px;width:160px;height:3px;background:#2d3340"></div>
<div class="a" style="left:1934.5px;top:823px;width:2px;height:536px;background:#d8dbe0"></div>
<div class="a" style="left:1069px;top:868px;height:36px;line-height:36px;font-size:25px;font-weight:bold;color:#2d3340;white-space:nowrap">text_input<span style="color:#ef4444;font-weight:normal;margin-left:2px">*</span></div>
<div class="a" style="left:1215px;top:867px;height:36px;line-height:36px;font-size:20.5px;font-style:italic;color:#2d3340">string</div>
<div class="a" style="left:1714px;top:861px;width:99px;height:51px;background:#f3f4f6;border-radius:9px"></div>
<div class="a fc" style="left:1718px;top:861px;width:54px;height:51px;font-size:19px;font-weight:bold;color:#2d3340">${}</div>
<div class="a" style="left:1776px;top:865px;width:35px;height:43px;background:#fff;border-radius:8px;box-shadow:0 1px 3px rgba(0,0,0,.15)"></div>
<svg class="a" style="left:1782px;top:877px;color:#3b82f6;" width="22" height="19" viewBox="0 0 24 24" fill="none" stroke="currentColor" stroke-width="2" stroke-linecap="round" stroke-linejoin="round"><path d="m8 6-6 6 6 6"/><path d="m16 6 6 6-6 6"/></svg>
<div class="a" style="left:1852px;top:867px;width:71px;height:39px;border:1.5px solid #e8eaed;border-radius:9px"></div>
<svg class="a" style="left:1866px;top:874px;color:#2d3340;" width="22" height="26" viewBox="0 0 24 24" fill="none" stroke="currentColor" stroke-width="2.2" stroke-linecap="round" stroke-linejoin="round"><path d="M8 2v6M16 2v6M5 8h14v4a7 7 0 0 1-14 0zM12 19v4"/></svg>
<svg class="a" style="left:1890px;top:877px;color:#2d3340;" width="19" height="19" viewBox="0 0 24 24" fill="none" stroke="currentColor" stroke-width="2.6" stroke-linecap="round" stroke-linejoin="round"><path d="M4 12h15M13 6l6 6-6 6"/></svg>
<div class="a" style="left:1068px;top:931px;width:855px;height:34px;border:1.5px solid #e2e4e8;border-radius:6px;overflow:hidden;background:#fff"><div class="a" style="left:0;top:0;width:52px;height:34px;background:#f8f9fa"></div><div class="a" style="left:829px;top:0;width:1.5px;height:34px;background:#e8e8e8"></div></div>
<div class="a" style="left:1083px;top:931px;height:34px;line-height:34px;font-family:'Liberation Mono',monospace;font-size:22px;color:#0b216f;margin-top:1px">1</div>
<div class="ln" style="left:1120px;top:934.5px;line-height:28px;font-size:22px"><span class="s">`</span>$<span class="b">{</span>flow_input.text<span class="b">}</span><span class="s">`</span></div>
<div class="a" style="left:1821px;top:964px;height:28px;line-height:28px;font-size:19px;color:#2d3340;text-decoration:underline;text-underline-offset:3px">Help&nbsp;</div>
<svg class="a" style="left:1878px;top:969px;color:#2d3340;" width="20" height="20" viewBox="0 0 24 24" fill="none" stroke="currentColor" stroke-width="2.4" stroke-linecap="round" stroke-linejoin="round"><path d="m5 9 7 7 7-7"/></svg>
<div class="a" style="left:1936.5px;top:945px;width:564px;height:414px;background:#f3f4f6"></div>
<div class="a fx" style="left:1949px;top:836px;width:310px;height:38px;background:#dbe4fb;border-radius:6px;padding-left:42px;font-size:24px;color:#1e44b0;white-space:nowrap;-webkit-text-stroke-width:0.8px">Edit or connect an input</div>
<svg class="a" style="left:1963px;top:844px;color:#1e44b0;" width="22" height="22" viewBox="0 0 24 24" fill="none" stroke="currentColor" stroke-width="2.2" stroke-linecap="round" stroke-linejoin="round"><path d="M20 12H4M10 6l-6 6 6 6"/></svg>
<div class="a fx" style="left:1949px;top:886px;width:600px;height:46px;background:#fff;border:1.5px solid #e2e4e8;border-radius:9px;padding-left:13px;font-size:23px;color:#6b7280;white-space:nowrap">Search prop...</div>
<div class="a" style="left:1949px;top:958px;height:30px;line-height:30px;font-size:22px;font-weight:bold;color:#2d3340">Flow Input</div>
<div class="a" style="left:1968px;top:992px;height:26px;line-height:26px;font-size:19px;font-weight:bold;color:#4b5563;white-space:nowrap;font-size:19px">text</div>
<div class="a" style="left:2014px;top:992px;height:26px;line-height:26px;font-size:19px;font-weight:bold;color:#4b5563;white-space:nowrap;color:#2d3340">:</div>
<div class="a" style="left:2032px;top:992px;height:26px;line-height:26px;font-size:19px;font-weight:bold;color:#4b5563;white-space:nowrap;color:#22a04b;font-size:17px">""</div>
<div class="a" style="left:1968px;top:1026px;height:26px;line-height:26px;font-size:19px;font-weight:bold;color:#4b5563;white-space:nowrap;font-size:17.5px">response_url</div>
<div class="a" style="left:2090px;top:1026px;height:26px;line-height:26px;font-size:19px;font-weight:bold;color:#4b5563;white-space:nowrap;color:#2d3340">:</div>
<div class="a" style="left:2108px;top:1026px;height:26px;line-height:26px;font-size:19px;font-weight:bold;color:#4b5563;white-space:nowrap;color:#22a04b;font-size:17px">""</div>
<div class="a" style="left:1949px;top:1073px;height:30px;line-height:30px;font-size:22px;font-weight:bold;color:#2d3340">Variables</div>
<div class="a fc" style="left:1949px;top:1106px;width:54px;height:39px;border:1.5px solid #4f86e8;border-radius:6px;background:#fff;font-size:24px;color:#2d3340">{...}</div>
<div class="a" style="left:1949px;top:1163px;height:30px;line-height:30px;font-size:22px;font-weight:bold;color:#2d3340">Resources</div>
<div class="a fc" style="left:1949px;top:1196px;width:54px;height:39px;border:1.5px solid #4f86e8;border-radius:6px;background:#fff;font-size:24px;color:#2d3340">{...}</div></body></html>
